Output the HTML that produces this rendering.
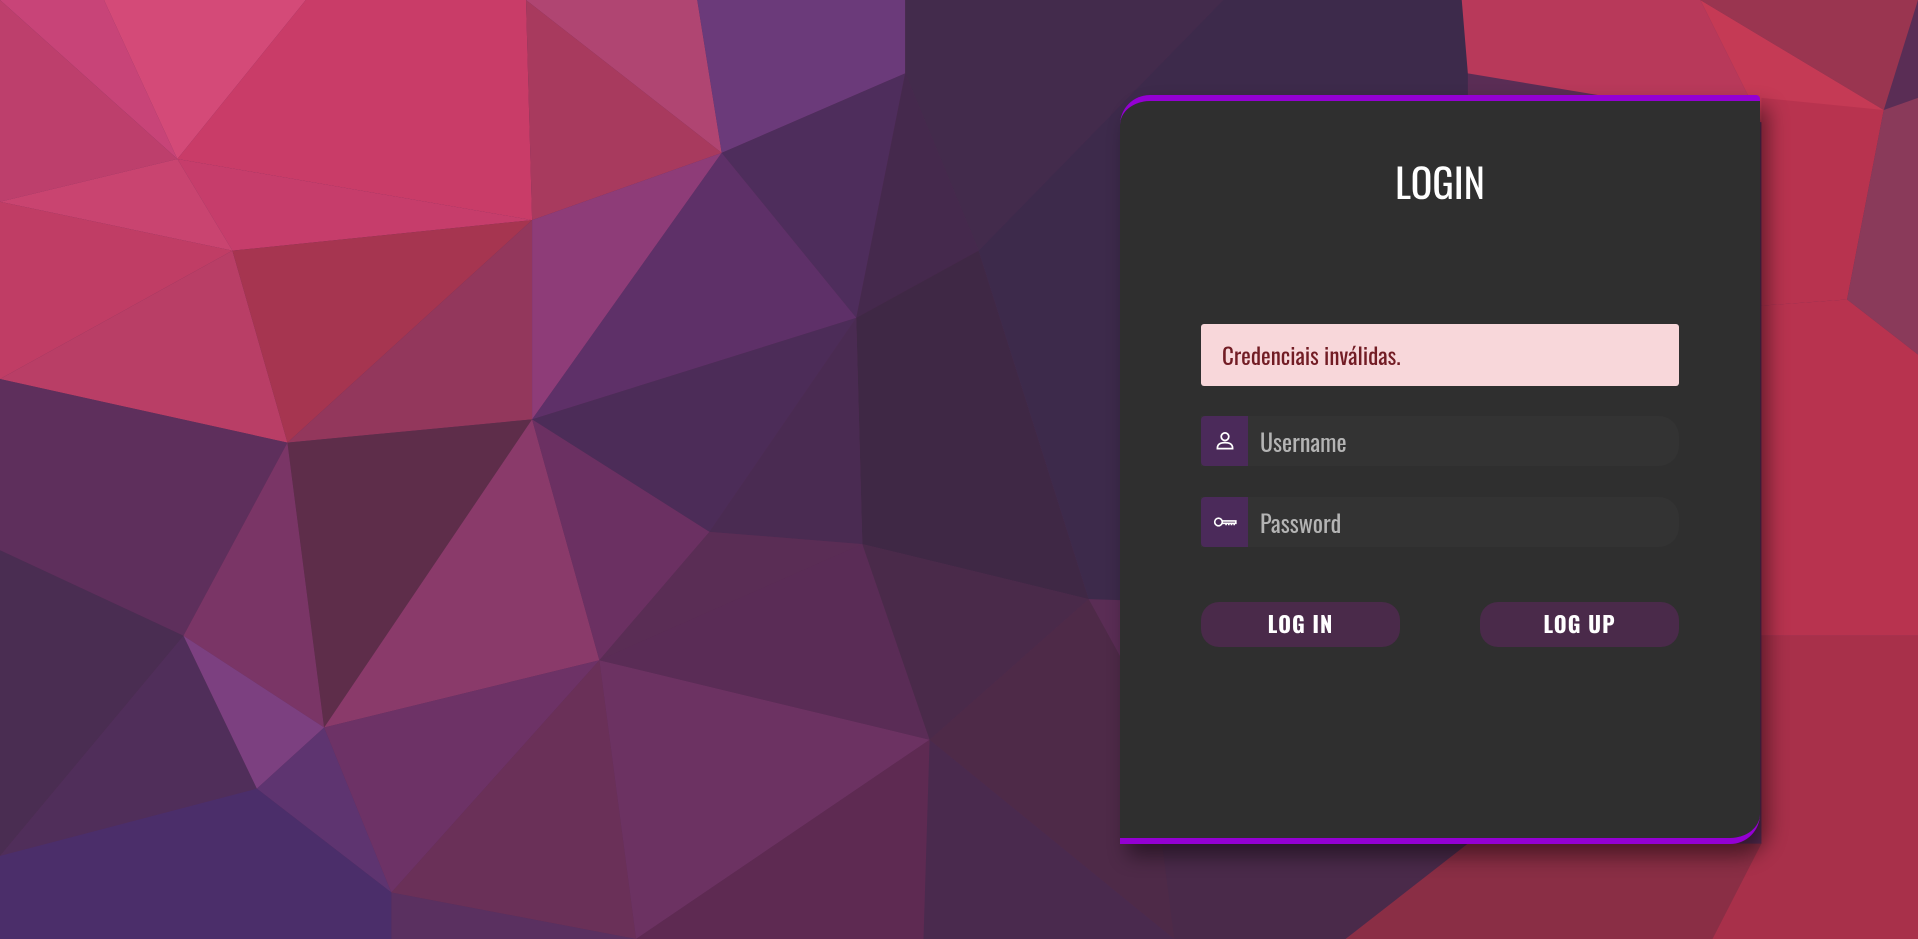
<!DOCTYPE html>
<html><head><meta charset="utf-8"><style>
html,body{margin:0;padding:0;width:1918px;height:939px;overflow:hidden;background:#6a3058}
svg.bg{position:absolute;left:0;top:0;width:1918px;height:939px}
.card{position:absolute;left:1120px;top:95px;width:640px;height:737px;background:#2f2f2f;border-top:6px solid #9400d3;border-bottom:6px solid #9400d3;border-radius:30px 4px 30px 0;box-shadow:8px 12px 20px rgba(0,0,0,.45);box-sizing:content-box}
.f{font-family:"Oswald","Liberation Sans Narrow","Liberation Sans",sans-serif}
h1{position:absolute;left:0;width:640px;top:50px;margin:0;text-align:center;color:#fff;font-weight:normal;font-size:40px;letter-spacing:0}
.alert{position:absolute;left:81px;top:223px;width:478px;height:62px;background:#f8d7da;border-radius:3px;color:#721c24;font-size:23px;line-height:62px;padding-left:21px;box-sizing:border-box}
.inp{position:absolute;left:81px;width:478px;height:50px;background:#333;border-radius:0 20px 20px 0}
.ic{position:absolute;left:0;top:0;width:47px;height:50px;background:#4b2a5a;border-radius:4px 0 0 4px}
.ic svg{position:absolute;left:11px;top:12px}
.ph{position:absolute;left:59px;top:0;line-height:50px;font-size:24px;color:#b4b4b4}
.btn{position:absolute;top:501px;width:199px;height:45px;background:#4a2a4a;border-radius:18px;color:#fff;font-weight:bold;font-size:22px;text-align:center;line-height:45px;letter-spacing:1px}
</style></head><body>
<svg class="bg" viewBox="0 0 1568 768" preserveAspectRatio="none">
<rect width="1568" height="768" fill="#5a2d55"/>
<polygon points="0,0 85,0 145,130" fill="#c84478"/>
<polygon points="0,0 145,130 0,165" fill="#bd3f6c"/>
<polygon points="85,0 250,0 145,130" fill="#d44a78"/>
<polygon points="250,0 430,0 435,180 145,130" fill="#c93c68"/>
<polygon points="145,130 435,180 190,205" fill="#c63d6b"/>
<polygon points="0,165 145,130 190,205" fill="#c94470"/>
<polygon points="0,165 190,205 0,310" fill="#c03d65"/>
<polygon points="0,310 190,205 235,362" fill="#b93e66"/>
<polygon points="190,205 435,180 235,362" fill="#a63550"/>
<polygon points="435,180 435,343 235,362" fill="#93375c"/>
<polygon points="430,0 570,0 590,125" fill="#b04572"/>
<polygon points="430,0 590,125 435,180" fill="#a83a5e"/>
<polygon points="435,180 590,125 435,343" fill="#8e3c78"/>
<polygon points="570,0 740,0 740,60 590,125" fill="#6b3a7a"/>
<polygon points="740,0 1000,0 800,205 740,60" fill="#432b4c"/>
<polygon points="590,125 740,60 700,260" fill="#4e2d5c"/>
<polygon points="590,125 700,260 435,343" fill="#5e3068"/>
<polygon points="435,343 700,260 580,435" fill="#4c2c58"/>
<polygon points="740,60 800,205 700,260" fill="#45294d"/>
<polygon points="700,260 800,205 890,490 705,445" fill="#3f2845"/>
<polygon points="700,260 705,445 580,435" fill="#4a2b52"/>
<polygon points="800,205 1000,0 1200,0 1200,500 890,490" fill="#3d2a4b"/>
<polygon points="0,310 235,362 150,520 0,450" fill="#5e2f5c"/>
<polygon points="235,362 265,595 150,520" fill="#7a3566"/>
<polygon points="235,362 435,343 265,595" fill="#5e2d4a"/>
<polygon points="435,343 490,540 265,595" fill="#8a3a6a"/>
<polygon points="435,343 580,435 490,540" fill="#6b3062"/>
<polygon points="580,435 705,445 490,540" fill="#5a2d55"/>
<polygon points="0,450 150,520 0,700" fill="#4a2d52"/>
<polygon points="150,520 210,645 0,700" fill="#502e5a"/>
<polygon points="150,520 265,595 210,645" fill="#7c4080"/>
<polygon points="265,595 320,730 210,645" fill="#5e3470"/>
<polygon points="265,595 490,540 320,730" fill="#6d3266"/>
<polygon points="490,540 520,768 320,730" fill="#6a3058"/>
<polygon points="490,540 760,605 520,768" fill="#6c3262"/>
<polygon points="490,540 705,445 760,605" fill="#5a2c56"/>
<polygon points="705,445 890,490 760,605" fill="#4a2a4a"/>
<polygon points="760,605 755,768 520,768" fill="#5e2a52"/>
<polygon points="760,605 960,768 755,768" fill="#4a2a4e"/>
<polygon points="890,490 1000,690 960,768 760,605" fill="#4e2a48"/>
<polygon points="0,700 210,645 320,730 320,768 0,768" fill="#4b2e6a"/>
<polygon points="320,730 520,768 320,768" fill="#5a3060"/>
<polygon points="950,690 1200,690 1100,768 960,768" fill="#4a2a4a"/>
<polygon points="1200,690 1440,690 1440,768 1100,768" fill="#8a2e45"/>
<polygon points="1195,0 1390,0 1440,100 1200,60" fill="#b8395a"/>
<polygon points="1390,0 1568,0 1540,90" fill="#9a3550"/>
<polygon points="1390,0 1540,90 1440,100" fill="#c53a55"/>
<polygon points="1440,80 1540,90 1510,245 1440,250" fill="#b8334f"/>
<polygon points="1540,90 1568,80 1568,290 1510,245" fill="#8a3a5a"/>
<polygon points="1440,250 1510,245 1568,290 1568,520 1440,520" fill="#b8334f"/>
<polygon points="1440,520 1568,520 1568,768 1400,768 1440,690" fill="#a8304a"/>
</svg>
<div class="card f">
<h1 class="f">LOGIN</h1>
<div class="alert f">Credenciais inválidas.</div>
<div class="inp" style="top:315px"><div class="ic"><svg width="26" height="26" viewBox="0 0 24 24" fill="none" stroke="#fff" stroke-width="1.6"><circle cx="12" cy="8" r="3.5"/><path d="M5 18.5c0-3.5 3-5 7-5s7 1.5 7 5v.5H5z"/></svg></div><div class="ph f">Username</div></div>
<div class="inp" style="top:396px"><div class="ic"><svg width="26" height="26" viewBox="0 0 24 24" fill="none" stroke="#fff" stroke-width="1.5"><circle cx="6" cy="12" r="3.5"/><path d="M9.5 11h12.5v2.2h-12.5M13 13v2M15.5 13v2M18 13v2M20.5 13v2"/></svg></div><div class="ph f">Password</div></div>
<div class="btn f" style="left:81px">LOG IN</div>
<div class="btn f" style="left:360px">LOG UP</div>
</div>
</body></html>
